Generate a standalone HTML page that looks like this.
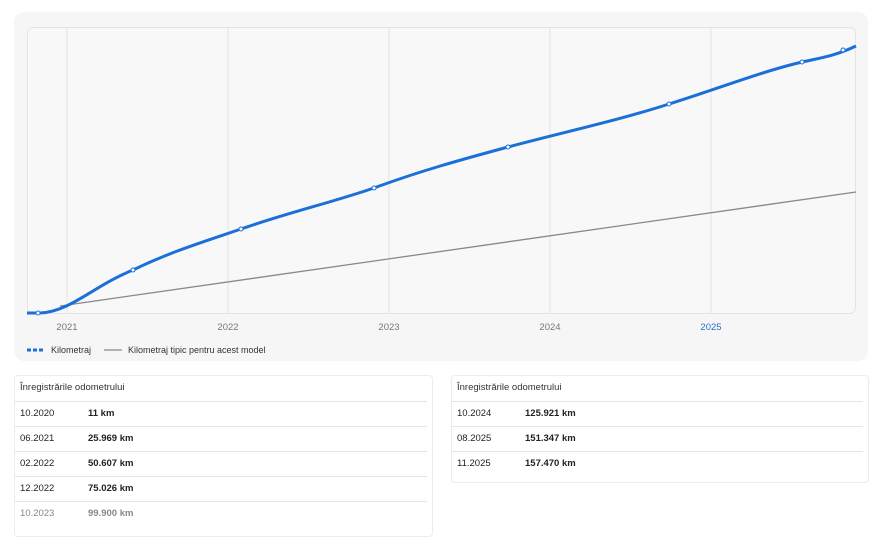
<!DOCTYPE html>
<html><head><meta charset="utf-8"><style>
body{margin:0;width:875px;height:530px;background:#fff;font-family:"Liberation Sans",sans-serif;position:relative;overflow:hidden}
.chart{position:absolute;left:14px;top:12px;width:854px;height:349px;background:#f6f6f6;border-radius:10px}
.tbl{position:absolute;background:#fff;border:1px solid #ececec;border-radius:4px;font-size:9.5px;color:#222}
.tbl .h{height:25px;line-height:24px;padding-left:5px;border-bottom:1px solid #e6e6e6;margin:0 5px 0 0;color:#333}
.tbl .r{height:24px;line-height:24px;padding-left:5px;border-bottom:1px solid #e6e6e6;margin-right:5px}
.tbl .r span{display:inline-block;width:68px}
.tbl .r b{font-weight:bold}
</style></head><body>
<div class="chart"></div>
<svg style="position:absolute;left:0;top:0" width="875" height="370">
<rect x="27.5" y="27.5" width="828" height="286" rx="6" fill="#f8f8f8" stroke="#e4e4e4"/>
<g stroke="#e4e4e4"><line x1="67" y1="28" x2="67" y2="313"/><line x1="228" y1="28" x2="228" y2="313"/><line x1="389" y1="28" x2="389" y2="313"/><line x1="550" y1="28" x2="550" y2="313"/><line x1="711" y1="28" x2="711" y2="313"/></g>
<line x1="60" y1="306" x2="856" y2="192" stroke="#888" stroke-width="1.3"/>
<path d="M27,313 L40,313 C70,312 95,285 133,270 C170,252 200,243 241,229 C290,212 330,203 374,188 C420,171 460,160 508,147 C560,133 620,120 669,104 C720,88 760,72 802,62 C820,58 835,56 856,46" fill="none" stroke="#1a6fd8" stroke-width="3"/>
<g fill="#fff" stroke="#1a6fd8" stroke-width="1"><circle cx="38" cy="313" r="2"/><circle cx="133" cy="270" r="2"/><circle cx="241" cy="229" r="2"/><circle cx="374" cy="188" r="2"/><circle cx="508" cy="147" r="2"/><circle cx="669" cy="104" r="2"/><circle cx="802" cy="62" r="2"/><circle cx="843" cy="50" r="2"/></g>
<g font-size="9.5" fill="#777" text-anchor="middle" font-family="Liberation Sans"><text x="67" y="330">2021</text><text x="228" y="330">2022</text><text x="389" y="330">2023</text><text x="550" y="330">2024</text><text x="711" y="330" fill="#2a6fc9">2025</text></g>
<line x1="27" y1="350" x2="45" y2="350" stroke="#1a6fd8" stroke-width="3" stroke-dasharray="4,2"/>
<text x="51" y="353" font-size="9" fill="#333" font-family="Liberation Sans">Kilometraj</text>
<line x1="104" y1="350" x2="122" y2="350" stroke="#888" stroke-width="1.3"/>
<text x="128" y="353" font-size="9" fill="#333" font-family="Liberation Sans">Kilometraj tipic pentru acest model</text>
</svg>
<div class="tbl" style="left:14px;top:375px;width:417px;height:160px">
<div class="h">Înregistrările odometrului</div>
<div class="r"><span>10.2020</span><b>11 km</b></div>
<div class="r"><span>06.2021</span><b>25.969 km</b></div>
<div class="r"><span>02.2022</span><b>50.607 km</b></div>
<div class="r"><span>12.2022</span><b>75.026 km</b></div>
<div class="r" style="border:none;color:#888"><span>10.2023</span><b>99.900 km</b></div>
</div>
<div class="tbl" style="left:451px;top:375px;width:416px;height:106px">
<div class="h">Înregistrările odometrului</div>
<div class="r"><span>10.2024</span><b>125.921 km</b></div>
<div class="r"><span>08.2025</span><b>151.347 km</b></div>
<div class="r" style="border:none"><span>11.2025</span><b>157.470 km</b></div>
</div>
</body></html>
